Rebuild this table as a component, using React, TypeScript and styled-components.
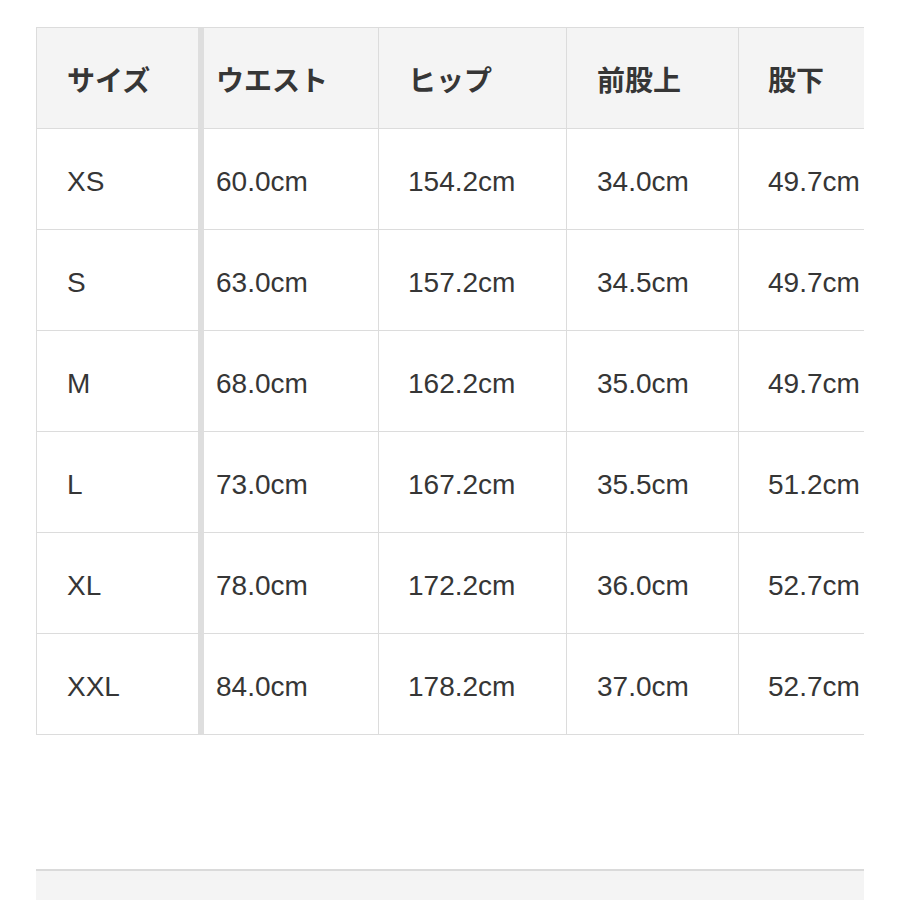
import React from 'react';
import styled, { createGlobalStyle } from 'styled-components';

const GlobalStyle = createGlobalStyle`
  body {
    margin: 0;
    background: #fff;
    font-family: 'Liberation Sans', 'Noto Sans CJK JP', sans-serif;
  }
`;

const Page = styled.div`
  width: 900px;
  height: 900px;
  overflow: hidden;
  padding: 27px 0 0 36px;
  box-sizing: border-box;
  display: flex;
  flex-direction: column;
`;

const TableWrap = styled.div`
  flex: 0 0 auto;
  width: 828px;
  overflow: hidden;
`;

const Table = styled.table`
  border-collapse: separate;
  border-spacing: 0;
  table-layout: fixed;
  width: 874px;
  border-top: 1px solid #dcdcdc;
  border-left: 1px solid #dcdcdc;
`;

const cols = [
  { width: 167, pad: 30 },
  { width: 175, pad: 12 },
  { width: 188, pad: 29 },
  { width: 172, pad: 30 },
  { width: 171, pad: 29 },
];

const Cell = styled.td<{ $pad: number; $first?: boolean; $head?: boolean }>`
  height: 101px;
  padding: ${(p) => (p.$head ? '1px' : '6px')} 0 0 ${(p) => p.$pad}px;
  box-sizing: border-box;
  border-bottom: 1px solid #dcdcdc;
  border-right: ${(p) => (p.$first ? '6px solid #dedede' : '1px solid #dcdcdc')};
  background: ${(p) => (p.$head ? '#f4f4f4' : '#fff')};
  color: #363636;
  font-size: 28px;
  font-weight: ${(p) => (p.$head ? 700 : 400)};
  font-family: ${(p) =>
    p.$head
      ? "'Noto Sans CJK JP', 'Liberation Sans', sans-serif"
      : "'Liberation Sans', 'Noto Sans CJK JP', sans-serif"};
  white-space: nowrap;
  vertical-align: middle;
  text-align: left;
`;

const Spacer = styled.div`
  flex: 0 0 134px;
`;

const FooterBar = styled.div`
  flex: 0 0 auto;
  width: 828px;
  height: 32px;
  border-top: 2px solid #dadada;
  background: #f4f4f4;
`;

const headers = ['サイズ', 'ウエスト', 'ヒップ', '前股上', '股下'];

const rows = [
  ['XS', '60.0cm', '154.2cm', '34.0cm', '49.7cm'],
  ['S', '63.0cm', '157.2cm', '34.5cm', '49.7cm'],
  ['M', '68.0cm', '162.2cm', '35.0cm', '49.7cm'],
  ['L', '73.0cm', '167.2cm', '35.5cm', '51.2cm'],
  ['XL', '78.0cm', '172.2cm', '36.0cm', '52.7cm'],
  ['XXL', '84.0cm', '178.2cm', '37.0cm', '52.7cm'],
];

export default function App() {
  return (
    <>
      <GlobalStyle />
      <Page>
        <TableWrap>
          <Table>
            <colgroup>
              {cols.map((c, i) => (
                <col key={i} style={{ width: c.width }} />
              ))}
            </colgroup>
            <thead>
              <tr>
                {headers.map((h, i) => (
                  <Cell as="th" key={h} $pad={cols[i].pad} $first={i === 0} $head>
                    {h}
                  </Cell>
                ))}
              </tr>
            </thead>
            <tbody>
              {rows.map((r) => (
                <tr key={r[0]}>
                  {r.map((v, i) => (
                    <Cell key={i} $pad={cols[i].pad} $first={i === 0}>
                      {v}
                    </Cell>
                  ))}
                </tr>
              ))}
            </tbody>
          </Table>
        </TableWrap>
        <Spacer />
        <FooterBar />
      </Page>
    </>
  );
}
